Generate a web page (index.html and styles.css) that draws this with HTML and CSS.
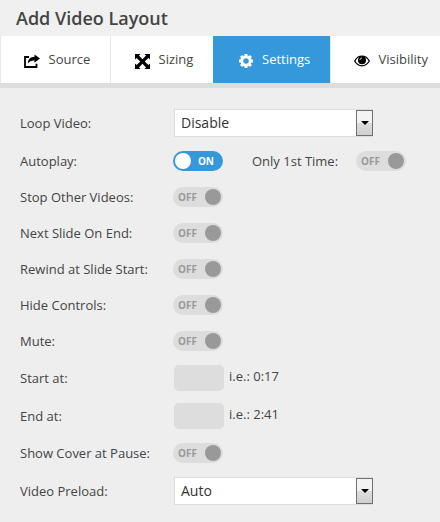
FILE: index.html
```html
<!DOCTYPE html>
<html lang="en">
<head>
<meta charset="utf-8">
<title>Add Video Layout</title>
<link rel="stylesheet" href="styles.css">
</head>
<body>
<h1 class="title">Add Video Layout</h1>
<nav class="tabs">
  <a class="tab source"><svg class="icon" viewBox="0 0 16 14"><path d="M5 3H1v10h11.500V9.800" fill="none" stroke="currentColor" stroke-width="1.800"/><path d="M10.500 0.500 16 4.600l-5.500 4.200V6.400C7.500 6.300 5.500 7 3.800 9.500 4 5 6.500 2.800 10.500 2.700Z" fill="currentColor"/></svg><span>Source</span></a>
  <a class="tab sizing"><svg class="icon" viewBox="0 0 14 14"><path d="M0 0h5.200L3.700 1.500 7 4.900l3.300-3.400L8.800 0H14v5.200l-1.500-1.500L9.100 7l3.400 3.300L14 8.800V14H8.800l1.500-1.500L7 9.100l-3.300 3.400L5.200 14H0V8.800l1.500 1.500L4.900 7 1.500 3.700 0 5.200Z" fill="currentColor"/></svg><span>Sizing</span></a>
  <a class="tab settings active"><svg class="icon" viewBox="0 0 14 14"><circle cx="7" cy="7" r="4.200" fill="none" stroke="currentColor" stroke-width="2.900"/><path d="M7 0v2M7 12v2M0 7h2M12 7h2M2.050 2.050l1.500 1.500M10.450 10.450l1.500 1.500M2.050 11.950l1.500-1.500M10.450 3.550l1.500-1.500" stroke="currentColor" stroke-width="2.900"/></svg><span>Settings</span></a>
  <a class="tab visibility"><svg class="icon" viewBox="0 0 16 12"><path d="M.7 6C4.200-.4 11.800-.4 15.300 6 11.800 12.400 4.200 12.400.7 6Z" fill="#fff" stroke="currentColor" stroke-width="1.300"/><circle cx="8" cy="5.300" r="4" fill="currentColor"/><path d="M5.900 5A2.200 2.200 0 0 1 8 3" fill="none" stroke="#fff" stroke-width=".8"/></svg><span>Visibility</span></a>
</nav>
<main class="form">
  <div class="row tall first"><label>Loop Video:</label><div class="select"><span>Disable</span><i class="arrow"></i></div></div>
  <div class="row"><label>Autoplay:</label><div class="toggle on"><i class="knob"></i><b>ON</b></div><label class="second">Only 1st Time:</label><div class="toggle"><b>OFF</b><i class="knob"></i></div></div>
  <div class="row"><label>Stop Other Videos:</label><div class="toggle"><b>OFF</b><i class="knob"></i></div></div>
  <div class="row"><label>Next Slide On End:</label><div class="toggle"><b>OFF</b><i class="knob"></i></div></div>
  <div class="row"><label>Rewind at Slide Start:</label><div class="toggle"><b>OFF</b><i class="knob"></i></div></div>
  <div class="row"><label>Hide Controls:</label><div class="toggle"><b>OFF</b><i class="knob"></i></div></div>
  <div class="row"><label>Mute:</label><div class="toggle"><b>OFF</b><i class="knob"></i></div></div>
  <div class="row tall"><label>Start at:</label><div class="field"></div><span class="hint">i.e.: 0:17</span></div>
  <div class="row tall"><label>End at:</label><div class="field"></div><span class="hint">i.e.: 2:41</span></div>
  <div class="row"><label>Show Cover at Pause:</label><div class="toggle"><b>OFF</b><i class="knob"></i></div></div>
  <div class="row tall last"><label>Video Preload:</label><div class="select"><span>Auto</span><i class="arrow"></i></div></div>
</main>
</body>
</html>
```
FILE: styles.css
```css
* { box-sizing: border-box; }
body {
  margin: 0;
  width: 440px;
  height: 522px;
  overflow: hidden;
  background: #eee;
  color: #444;
  font: 13px/20px "Open Sans", sans-serif;
}
.title {
  margin: 0;
  height: 36px;
  padding-left: 16px;
  background: #f0f0f0;
  font-size: 18px;
  font-weight: 600;
  line-height: 37px;
}
.tabs {
  display: flex;
  gap: 1px;
  height: 52px;
  padding-left: 1px;
  background: #e9e9e9;
  border-bottom: 5px solid #ddd;
}
.tab {
  display: flex;
  align-items: center;
  background: #fff;
  white-space: nowrap;
}
.tab .icon { flex: none; margin-top: 3px; color: #000; }
.tab span { margin-top: -2px; }
.source { width: 109px; padding-left: 23px; }
.source .icon { width: 16px; height: 14px; margin-right: 8.500px; }
.sizing { width: 102px; padding-left: 24px; margin-right: -1px; }
.sizing .icon { width: 15px; height: 15px; margin-right: 8.500px; }
.settings { width: 117px; padding-left: 26px; }
.settings .icon { width: 14px; height: 14px; margin-right: 9px; }
.visibility { width: 109px; padding-left: 23px; }
.visibility .icon { width: 16px; height: 12px; margin-right: 8.500px; }
.tab.active { background: #3498db; color: #fff; }
.tab.active .icon { color: #fff; }
.form { padding: 16px 0 0 20px; }
.row { display: flex; align-items: center; height: 36px; }
.row.tall { height: 38px; }
.row.first { margin-bottom: 1px; }
.row.last { height: 40px; }
.row label { width: 153px; white-space: nowrap; }
.row label.second { width: 104px; margin-left: 29px; }
.select {
  display: flex;
  align-items: center;
  justify-content: space-between;
  width: 199px;
  height: 28px;
  margin-left: 1px;
  padding-left: 6px;
  background: #fff;
  border: 1px solid #ddd;
  border-right: 0;
  color: #333;
  font-size: 14px;
}
.arrow {
  display: flex;
  align-items: center;
  justify-content: center;
  width: 17px;
  height: 26px;
  border: 1px solid #707070;
  background: linear-gradient(#f3f3f3 50%, #ddd 50%, #d0d0d0);
}
.arrow::after {
  content: "";
  border: 4px solid transparent;
  border-top-color: #000;
  border-bottom: 0;
}
.toggle {
  display: flex;
  align-items: center;
  justify-content: space-between;
  width: 50px;
  height: 20px;
  padding: 0 2px 0 5px;
  border-radius: 10px;
  background: #ddd;
  color: #999;
}
.toggle b { font-size: 10px; font-weight: 700; line-height: 20px; }
.knob { width: 16px; height: 16px; border-radius: 50%; background: #999; }
.toggle.on { padding: 0 9px 0 2px; background: #3498db; color: #fff; }
.toggle.on .knob { background: #fff; }
.field { width: 50px; height: 26px; margin-left: 1px; border-radius: 5px; background: #ddd; }
.hint { margin: -4px 0 0 5px; }
```
